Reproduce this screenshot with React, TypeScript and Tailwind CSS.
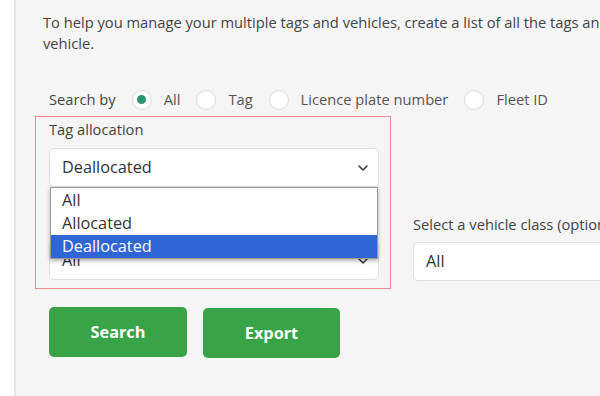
import React from 'react';

const Chevron: React.FC = () => (
  <svg width="10" height="6" viewBox="0 0 10 6" className="text-[#333]">
    <path d="M1 1l4 4 4-4" fill="none" stroke="currentColor" strokeWidth="1.5" strokeLinecap="round" strokeLinejoin="round" />
  </svg>
);

const Radio: React.FC<{ label: string; checked?: boolean }> = ({ label, checked }) => (
  <label className="flex items-center gap-3">
    <span className="flex h-[20px] w-[20px] items-center justify-center rounded-full border border-[#dcdcdc] bg-white">
      {checked && <span className="h-[9px] w-[9px] rounded-full bg-[#2a946a]"></span>}
    </span>
    <span className="text-[#555]">{label}</span>
  </label>
);

const SelectBox: React.FC<{ value: string; chevron?: boolean; className?: string }> = ({ value, chevron = true, className = '' }) => (
  <div className={`flex h-[39px] items-center justify-between rounded-[5px] border border-[#dedede] bg-white pl-[12px] pr-[10px] text-[16.3px] text-[#333] ${className}`}>
    <span>{value}</span>
    {chevron && <Chevron />}
  </div>
);

const options = ['All', 'Allocated', 'Deallocated'];

export default function App() {
  return (
    <div className="flex h-[396px] w-[600px] overflow-hidden bg-white text-[14.7px] leading-[21px]" style={{ fontFamily: '"Open Sans", "Liberation Sans", sans-serif' }}>
      <div className="w-[16px] shrink-0 border-r-2 border-[#e6e6e6] bg-white"></div>
      <div className="w-[720px] shrink-0 bg-[#f5f5f5] pl-[27px] pt-[12px]">
        <p className="text-[#444]">
          <span className="whitespace-nowrap">To help you manage your multiple tags and vehicles, create a list of all the tags and licence plates for each</span>
          <br />
          vehicle.
        </p>

        <div className="ml-[6px] mt-[35px] flex items-center gap-4">
          <span className="text-[#444]">Search by</span>
          <Radio label="All" checked />
          <Radio label="Tag" />
          <Radio label="Licence plate number" />
          <Radio label="Fleet ID" />
        </div>

        <div className="mt-[6px] flex items-end gap-[22px] -ml-[8px]">
          <div className="w-[356px] border border-[#f08a8a] pb-[8px] pl-[13px] pr-[11px] pt-[2px]">
            <div className="text-[#444]">Tag allocation</div>
            <div className="relative mt-[8px]">
              <SelectBox value="Deallocated" />
              <ul className="absolute left-[1px] right-[1px] top-[39px] z-10 border border-[#9a9a9a] bg-white pt-[1px] text-[16.3px] leading-[23px] text-[#333] shadow-[0_2px_4px_rgba(0,0,0,0.3)]">
                {options.map((o) => (
                  <li key={o} className={`pl-[11px] ${o === 'Deallocated' ? 'bg-[#2f66d6] text-white' : ''}`}>
                    {o}
                  </li>
                ))}
              </ul>
            </div>
            <div className="mt-[25px] h-[21px]" aria-hidden="true"></div>
            <SelectBox value="All" className="mt-[8px]" />
          </div>

          <div className="mb-[8px] w-[260px]">
            <div className="text-[#444]">Select a vehicle class (optional)</div>
            <SelectBox value="All" chevron={false} className="mt-[7px]" />
          </div>
        </div>

        <div className="ml-[6px] mt-[18px] flex gap-4">
          <button className="h-[50px] w-[138px] rounded-[5px] bg-[#38a347] text-[16.3px] font-bold text-white">Search</button>
          <button className="mt-[1px] h-[50px] w-[137px] rounded-[5px] bg-[#38a347] text-[16.3px] font-bold text-white">Export</button>
        </div>
      </div>
    </div>
  );
}
